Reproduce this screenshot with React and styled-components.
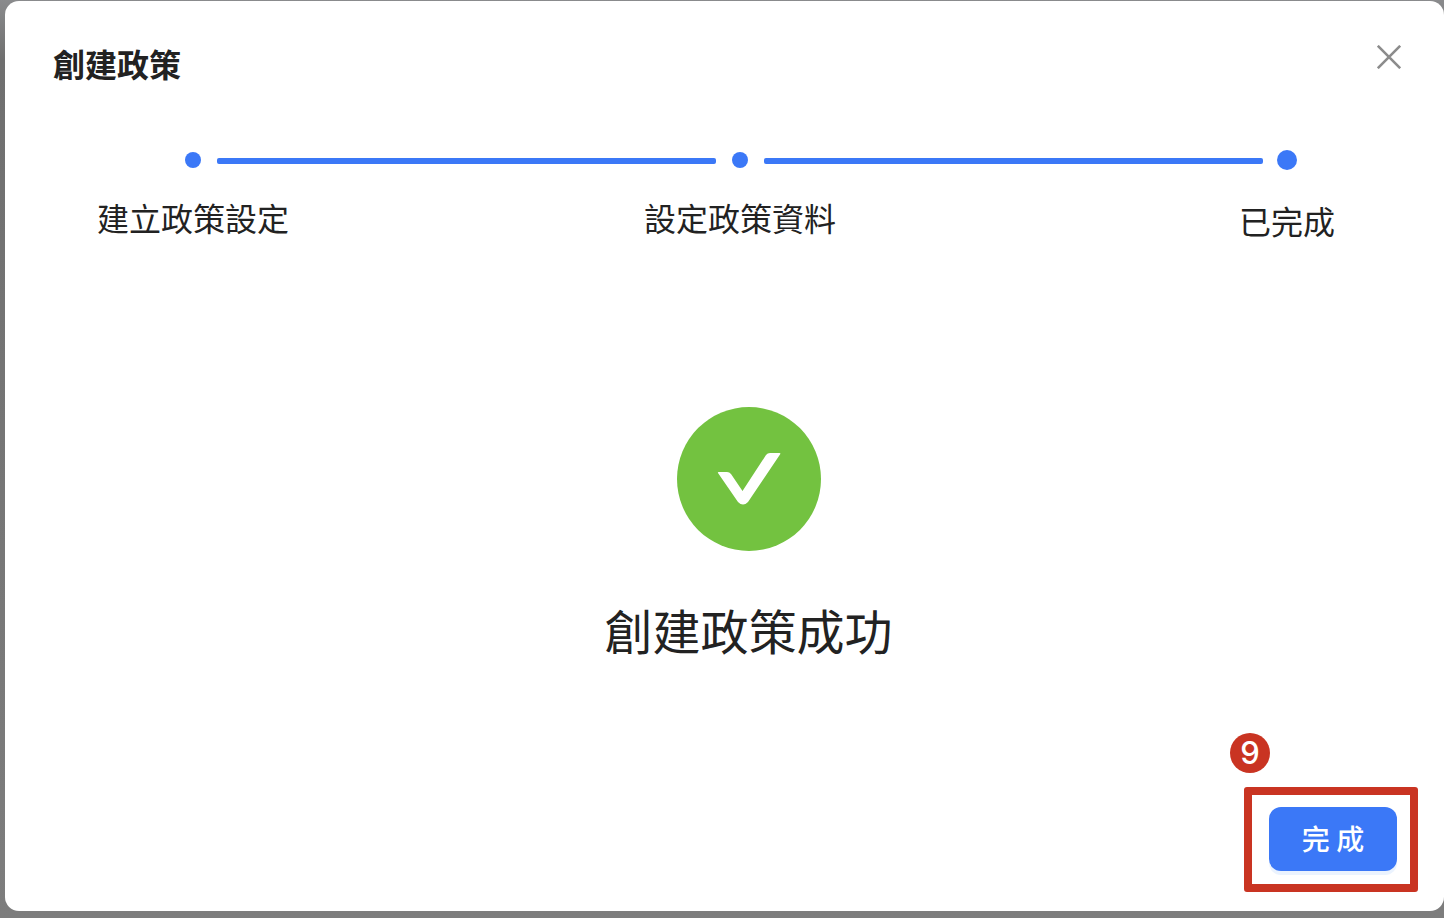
import React from 'react';
import styled, { createGlobalStyle } from 'styled-components';

const GlobalStyle = createGlobalStyle`
  html, body {
    margin: 0;
    padding: 0;
    height: 100%;
    overflow: hidden;
  }
  body {
    font-family: "Noto Sans CJK TC", "Noto Sans", sans-serif;
    color: #222222;
  }
`;

const Backdrop = styled.div`
  box-sizing: border-box;
  width: 1444px;
  height: 918px;
  padding: 1px 0 7px 5px;
  background: linear-gradient(180deg, #8a8b8d 0, #6f6f6f 60px, #7d7d7d 100%);
`;

const Modal = styled.div`
  box-sizing: border-box;
  height: 100%;
  display: flex;
  flex-direction: column;
  padding: 0 26px 19px 48px;
  background: #ffffff;
  border-radius: 14px;
`;

const Header = styled.div`
  display: flex;
  justify-content: space-between;
  align-items: flex-start;
  padding-top: 39px;
  height: 139px;
  box-sizing: border-box;
`;

const Title = styled.h1`
  margin: 0;
  font-size: 32px;
  line-height: 46px;
  font-weight: 700;
  color: #222222;
`;

const CloseButton = styled.button`
  display: flex;
  margin: 5px 17px 0 0;
  padding: 0;
  border: 0;
  background: none;
  color: #8c8c8c;
`;

const Stepper = styled.div`
  display: flex;
  align-items: flex-start;
  padding-left: 132px;
  height: 40px;
`;

const Step = styled.div`
  width: ${({ $size }) => $size}px;
  display: flex;
  flex-direction: column;
  align-items: center;
  margin-top: ${({ $size }) => (42 - $size) / 2 - 1}px;
`;

const Dot = styled.span`
  flex: none;
  width: ${({ $size }) => $size}px;
  height: ${({ $size }) => $size}px;
  border-radius: 50%;
  background: #3b78f7;
`;

const StepLabel = styled.span`
  flex: none;
  margin-top: ${({ $last }) => ($last ? 27 : 26)}px;
  font-size: 32px;
  line-height: 46px;
  white-space: nowrap;
  color: #222222;
`;

const Connector = styled.span`
  flex: none;
  width: 499px;
  height: 6px;
  margin: 18px ${({ $gapRight }) => $gapRight}px 0 16px;
  border-radius: 2px;
  background: #3b78f7;
`;

const Result = styled.div`
  flex: 1;
  display: flex;
  flex-direction: column;
  align-items: center;
  padding: 227px 0 0;
  margin-left: 26px;
`;

const CheckBadge = styled.svg`
  display: block;
  width: 144px;
  height: 144px;
`;

const ResultText = styled.div`
  margin-top: 43px;
  font-size: 48px;
  line-height: 70px;
  color: #222222;
`;

const Footer = styled.div`
  display: flex;
  justify-content: flex-end;
`;

const Highlight = styled.div`
  position: relative;
  display: flex;
  padding: 12px 13px 13px 17px;
  border: 8px solid #c93422;
  border-radius: 3px;
`;

const StepBadge = styled.span`
  position: absolute;
  top: -62px;
  left: -22px;
  width: 40px;
  height: 40px;
  border-radius: 50%;
  background: #c93422;
  color: #ffffff;
  font-family: "Inter", "Liberation Sans", sans-serif;
  font-size: 31px;
  font-weight: 500;
  line-height: 40px;
  text-align: center;
`;

const DoneButton = styled.button`
  width: 128px;
  height: 64px;
  padding: 0 0 2px;
  border: 0;
  border-radius: 12px;
  background: #3b78f7;
  box-shadow: 0 4px 0 #ebf3fe;
  color: #ffffff;
  font-family: inherit;
  font-size: 28px;
  font-weight: 500;
  line-height: 40px;
`;

const steps = [
  { label: '建立政策設定', size: 16, gapRight: 16 },
  { label: '設定政策資料', size: 16, gapRight: 14 },
  { label: '已完成', size: 20 },
];

export default function App() {
  return (
    <>
      <GlobalStyle />
      <Backdrop>
        <Modal>
          <Header>
            <Title>創建政策</Title>
            <CloseButton aria-label="關閉">
              <svg width="24" height="24" viewBox="0 0 24 24" fill="none" stroke="currentColor" strokeWidth="2.6">
                <path d="M0.8 0.8 L23.2 23.2 M23.2 0.8 L0.8 23.2" />
              </svg>
            </CloseButton>
          </Header>
          <Stepper>
            {steps.map((step, index) => (
              <React.Fragment key={step.label}>
                <Step $size={step.size}>
                  <Dot $size={step.size} />
                  <StepLabel $last={index === steps.length - 1}>{step.label}</StepLabel>
                </Step>
                {index < steps.length - 1 && <Connector $gapRight={step.gapRight} />}
              </React.Fragment>
            ))}
          </Stepper>
          <Result>
            <CheckBadge viewBox="0 0 144 144">
              <circle cx="72" cy="72" r="72" fill="#73c240" />
              <path
                fill="#ffffff"
                d="M41.5 65 H50 Q52.500 65 54 67 L65.500 84 L89 48 Q90.500 46 93 46 H102.500 Q104 46 103 47.500 L71 95 Q66 100 61 95 L41 66 Q40.500 65 41.500 65 Z"
              />
            </CheckBadge>
            <ResultText>創建政策成功</ResultText>
          </Result>
          <Footer>
            <Highlight>
              <StepBadge>9</StepBadge>
              <DoneButton>完 成</DoneButton>
            </Highlight>
          </Footer>
        </Modal>
      </Backdrop>
    </>
  );
}
